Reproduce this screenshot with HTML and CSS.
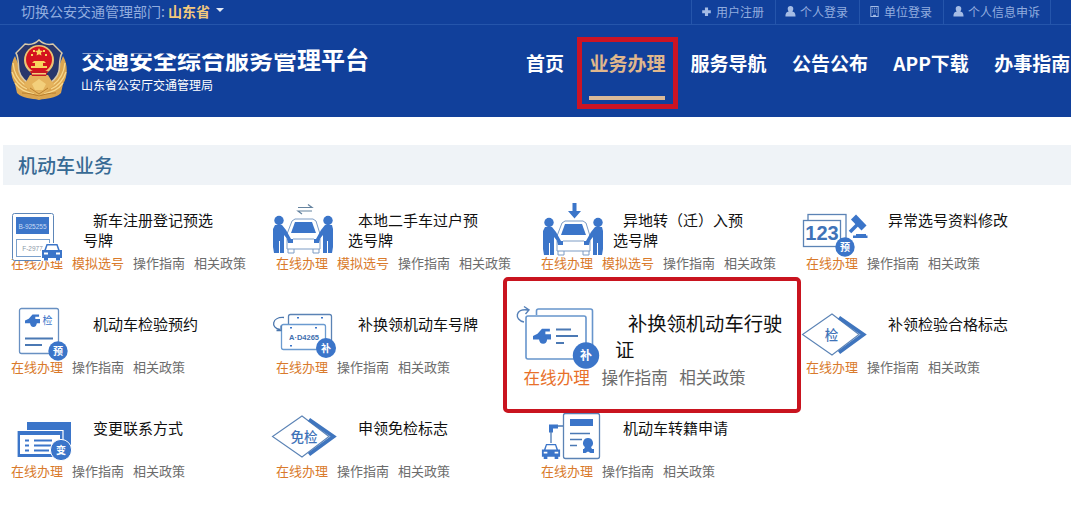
FILE: index.html
```html
<!DOCTYPE html>
<html lang="zh-CN">
<head>
  <meta charset="UTF-8" />
  <meta name="viewport" content="width=device-width, initial-scale=1" />
  <title>交通安全综合服务管理平台</title>
  <link rel="stylesheet" href="styles.css">
</head>
<body>

<!-- Iconos compartidos -->
<svg class="defs" width="0" height="0" aria-hidden="true">
  <symbol id="car" viewBox="0 0 22 18" preserveAspectRatio="none">
    <path fill="#fff" d="M4 0h14l4 7v11H0V7z"/>
    <path fill="#3b75c9" d="M5.5 1h11l2.200 6H21v8h-2v2.500h-4V15H7v2.500H3V15H1V7h2.300z"/>
    <path fill="#fff" d="M6.500 2.500h9L17 7H5zM3 9.500h4v2H3zM15 9.500h4v2h-4z"/>
  </symbol>
  <symbol id="truck" viewBox="0 0 16 16">
    <path fill="#3b75c9" d="M0 8l4-2 4-4.500h7V4h-4v2.500h5V11h-3.500a3.600 3.600 0 0 1-7 0H0z"/>
    <circle cx="9" cy="11.500" r="3.300" fill="#3b75c9"/>
  </symbol>
  <symbol id="people" viewBox="0 0 70 50" overflow="visible">
    <g fill="none" stroke="#7d9cc5" stroke-width="1">
      <path d="M19 29l5-13 3-2h18l3 2 4 13M19 29v15h33V29M25 34h21M20 44v4h6v-4M45 44v4h6v-4"/>
    </g>
    <path fill="#3b75c9" d="M27 17h17l4 11H23z"/>
    <g fill="#3b75c9">
      <circle cx="11" cy="15.500" r="4.700"/>
      <path d="M7 20h7l4 5 5 9-2 2-5-6v18h-4V36h-1v12H6l-1-6V24z"/>
      <circle cx="60" cy="15.500" r="4.700"/>
      <path d="M64 20h-7l-4 5-5 9 2 2 5-6v18h4V36h1v12h4l1-6V24z"/>
      <path d="M19 34h6v4h-5zM46 34h6l-1 4h-5z"/>
    </g>
  </symbol>
  <symbol id="user" viewBox="0 0 12 12">
    <path d="M6 0a3 3 0 0 1 3 3.200C9 5 8 5.800 8 6c2 .5 3.500 1.500 3.500 5.500H.5C.5 7.500 2 6.500 4 6 4 5.800 3 5 3 3.200A3 3 0 0 1 6 0z"/>
  </symbol>
</svg>

<header>
  <div class="topbar">
    <div class="region">切换公安交通管理部门: <b>山东省</b><i class="caret"></i></div>
    <div class="accesos">
      <a><svg viewBox="0 0 12 12"><path d="M4.300 1.500h3.400v3h3v3.400h-3v3H4.300v-3h-3V4.500h3z"/></svg>用户注册</a>
      <a><svg viewBox="0 0 12 12"><use href="#user"/></svg>个人登录</a>
      <a><svg viewBox="0 0 12 12"><path d="M1.500 0h9v12h-9zM2.500 1v10h2V9.500h3V11h2V1z" fill-rule="evenodd"/><path d="M3.500 2h1v1h-1zM5.500 2h1v1h-1zM7.500 2h1v1h-1zM3.500 4h1v1h-1zM5.500 4h1v1h-1zM7.500 4h1v1h-1zM3.500 6h1v1h-1zM5.500 6h1v1h-1zM7.500 6h1v1h-1z"/></svg>单位登录</a>
      <a><svg viewBox="0 0 12 12"><use href="#user"/></svg>个人信息申诉</a>
    </div>
  </div>
  <div class="cabecera">
    <svg class="emblema" viewBox="0 0 58 62">
      <path fill="#dba550" d="M5 17C0 25 0 38 5 45l2 9c6 6 14 5 22 7 8-2 16-1 22-7l2-9c5-7 5-20 0-28l-9 23H14z"/>
      <g fill="none" stroke="#f7d88d" stroke-width="1.300">
        <path d="M3 24c1 10 5 17 12 22M2 33c3 9 8 14 15 17M5 44c5 7 11 9 19 11M55 24c-1 10-5 17-12 22M56 33c-3 9-8 14-15 17M53 44c-5 7-11 9-19 11"/>
      </g>
      <path fill="#28366c" stroke="#d9c9a8" stroke-width="1.500" d="M29 1c4 4 9 5 14 4l9 9c-3 5-2 12-3 18-2 9-11 13-20 20C20 45 11 41 9 32 8 26 9 19 6 14l9-9c5 1 10 0 14-4z"/>
      <path fill="#e5b35c" d="M20 36h18l6 10-15 13-15-13z"/>
      <circle cx="29" cy="21" r="15" fill="#ecc474"/>
      <circle cx="29" cy="20.500" r="13" fill="#d4121f"/>
      <path fill="#f8d45e" d="M29 9l1.200 2.600 2.800.3-2.100 1.900.6 2.800-2.500-1.400-2.500 1.400.6-2.800-2.100-1.900 2.800-.3zM21 15h2v2h-2zM35 15h2v2h-2zM23 11h2v2h-2zM33 11h2v2h-2zM24 22h10l2 2h-3v3h4v2H21v-2h4v-3h-3z"/>
      <path fill="#c71a22" d="M20 32h18l-2 5H22z"/>
      <path fill="#f3cf7b" d="M22 34h14v1.500H22zM22 45l7-5 7 5-3 6h-8z"/>
      <path fill="none" stroke="#b97f2e" d="M12 54c6 0 10 1 17 3 7-2 11-3 17-3M20 49l9 6 9-6"/>
    </svg>
    <div class="marca">
      <h1>交通安全综合服务管理平台</h1>
      <p>山东省公安厅交通管理局</p>
    </div>
    <nav>
      <a>首页</a>
      <a class="activo">业务办理</a>
      <a>服务导航</a>
      <a>公告公布</a>
      <a>APP下载</a>
      <a>办事指南</a>
    </nav>
  </div>
</header>

<main>
  <h2>机动车业务</h2>
  <div class="tramites">

    <section class="tramite">
      <div class="info">
        <svg class="icono" viewBox="0 0 80 50">
          <rect x="9.500" y="8.500" width="41" height="47" rx="2" fill="#fff" stroke="#5d86b8"/>
          <rect x="13" y="12" width="33" height="17" fill="#3b75c9"/>
          <rect x="13.500" y="34.500" width="33" height="17" fill="#fff" stroke="#7aa0cc"/>
          <text x="29.500" y="23.500" class="placa" fill="#c9dcf5">B-925255</text>
          <text x="29.500" y="45.500" class="placa" fill="#8a97a8">F-2977</text>
          <use href="#car" x="38" y="38" width="22" height="18"/>
        </svg>
        <h3>新车注册登记预选号牌</h3>
      </div>
      <div class="enlaces"><a class="on">在线办理</a><a class="on">模拟选号</a><a>操作指南</a><a>相关政策</a></div>
    </section>

    <section class="tramite">
      <div class="info">
        <svg class="icono" viewBox="0 0 80 50">
          <use href="#people" width="70" height="50"/>
          <path fill="none" stroke="#65839f" stroke-width="1.200" d="M30 2.500h14l-4-3M44 6h-14l4 3"/>
        </svg>
        <h3>本地二手车过户预选号牌</h3>
      </div>
      <div class="enlaces"><a class="on">在线办理</a><a class="on">模拟选号</a><a>操作指南</a><a>相关政策</a></div>
    </section>

    <section class="tramite">
      <div class="info">
        <svg class="icono" viewBox="0 0 80 50">
          <use href="#people" x="5" y="2" width="70" height="50"/>
          <path fill="#3b75c9" d="M39.500-2h4v8h4.500l-6.500 7.500L35 6h4.500z"/>
        </svg>
        <h3>异地转（迁）入预选号牌</h3>
      </div>
      <div class="enlaces"><a class="on">在线办理</a><a class="on">模拟选号</a><a>操作指南</a><a>相关政策</a></div>
    </section>

    <section class="tramite">
      <div class="info">
        <svg class="icono" viewBox="0 0 80 50">
          <rect x="10" y="9.500" width="38" height="27" fill="#fff" stroke="#5b83b5" stroke-width="1.300"/>
          <rect x="5.500" y="15.500" width="37" height="26" fill="#fff" stroke="#5b83b5" stroke-width="1.300"/>
          <text x="24" y="35" class="cifra">123</text>
          <path fill="none" stroke="#3b75c9" stroke-width="7" d="M55.500 12L66 23"/>
          <path fill="none" stroke="#3b75c9" stroke-width="3.500" d="M61 18l-9 9"/>
          <path fill="#3b75c9" d="M58 29h10v1.500h1.500V33H55v-2.500h3z"/>
          <circle cx="47" cy="42" r="9.700" fill="#3b75c9"/>
          <text x="47" y="45.500" class="sello">预</text>
        </svg>
        <h3>异常选号资料修改</h3>
      </div>
      <div class="enlaces"><a class="on">在线办理</a><a>操作指南</a><a>相关政策</a></div>
    </section>

    <section class="tramite">
      <div class="info">
        <svg class="icono" viewBox="0 0 80 50">
          <rect x="16.500" y="-.5" width="39" height="45" rx="2" fill="#fff" stroke="#6890c2" stroke-width="1.300"/>
          <use href="#truck" x="22" y="4" width="15" height="15"/>
          <text x="44.500" y="14.500" class="sello azul">检</text>
          <path stroke="#4b79b4" stroke-width="2" d="M22 29.500h28M22 36h17"/>
          <circle cx="55" cy="42" r="9.700" fill="#3b75c9"/>
          <text x="55" y="45.500" class="sello">预</text>
        </svg>
        <h3>机动车检验预约</h3>
      </div>
      <div class="enlaces"><a class="on">在线办理</a><a>操作指南</a><a>相关政策</a></div>
    </section>

    <section class="tramite">
      <div class="info">
        <svg class="icono" viewBox="0 0 80 50">
          <rect x="20.500" y="5.500" width="43" height="30" rx="2" fill="#fff" stroke="#5b83b5" stroke-width="1.300"/>
          <rect x="13.500" y="15.500" width="44" height="25" rx="2" fill="#fff" stroke="#6b9bd0" stroke-width="1.300"/>
          <path fill="#3b75c9" d="M29 8h2v1.500h-2zM53 8h2v1.500h-2zM22 18h2v1.500h-2zM47 18h2v1.500h-2zM22 36h2v1.500h-2z"/>
          <path fill="none" stroke="#4a76ad" stroke-width="1.300" d="M16 8.500C4 7.500 2 19 12 20.500M8.500 21.500h4.500V16.500"/>
          <text x="36" y="30.500" class="matricula">A·D4265</text>
          <circle cx="58" cy="39" r="10" fill="#3b75c9"/>
          <text x="58" y="42.500" class="sello">补</text>
        </svg>
        <h3>补换领机动车号牌</h3>
      </div>
      <div class="enlaces"><a class="on">在线办理</a><a>操作指南</a><a>相关政策</a></div>
    </section>

    <section class="tramite">
      <!-- Tarjeta ampliada sobre la cuadrícula -->
      <div class="destacado">
        <div class="info">
          <svg class="icono" viewBox="0 0 107 82">
            <path fill="#fff" stroke="#6795cc" stroke-width="1.600" d="M28.500 33v-4a2 2 0 0 1 2-2h52a2 2 0 0 1 2 2v46h-8"/>
            <rect x="18" y="34" width="60" height="43" rx="2" fill="#fff" stroke="#6795cc" stroke-width="1.600"/>
            <path fill="none" stroke="#5580b8" stroke-width="1.400" d="M16 40C6 38 7 26 20 28M16 24.500l5 3.500-3.500 4"/>
            <use href="#truck" x="25" y="45" width="18" height="18"/>
            <path stroke="#4b79b4" stroke-width="2" d="M48 47.500h15M48 54h22M48 61h8"/>
            <circle cx="78" cy="73.500" r="13.200" fill="#3b75c9"/>
            <text x="78" y="78" class="sello">补</text>
          </svg>
          <h3>补换领机动车行驶证</h3>
        </div>
        <div class="enlaces"><a class="on">在线办理</a><a>操作指南</a><a>相关政策</a></div>
      </div>
    </section>

    <section class="tramite">
      <div class="info">
        <svg class="icono" viewBox="0 0 80 50">
          <path fill="none" stroke="#5b83b5" stroke-width="1.100" d="M61 25.500L34 5 4.500 25.500 34 46z"/>
          <path fill="none" stroke="#3f75be" stroke-width="3.800" d="M41 8.500l24.500 17-24.500 18"/>
          <text x="33.500" y="30.500" class="rombo">检</text>
        </svg>
        <h3>补领检验合格标志</h3>
      </div>
      <div class="enlaces"><a class="on">在线办理</a><a>操作指南</a><a>相关政策</a></div>
    </section>

    <section class="tramite">
      <div class="info">
        <svg class="icono" viewBox="0 0 80 50">
          <path fill="#3b75c9" d="M24 9h44v29H24z"/>
          <path fill="#3b75c9" stroke="#fff" stroke-width="1.200" d="M14 17.500h46v27H14z"/>
          <path fill="#fff" d="M17 22h40v19H17z"/>
          <path stroke="#3b75c9" stroke-width="2" d="M22 27.500h4M31 27.500h18M22 32.500h4M31 32.500h17M22 37.500h4M31 37.500h15"/>
          <circle cx="58" cy="37" r="10.600" fill="#3b75c9" stroke="#fff"/>
          <text x="58" y="40.500" class="sello">变</text>
        </svg>
        <h3>变更联系方式</h3>
      </div>
      <div class="enlaces"><a class="on">在线办理</a><a>操作指南</a><a>相关政策</a></div>
    </section>

    <section class="tramite">
      <div class="info">
        <svg class="icono" viewBox="0 0 80 50">
          <path fill="none" stroke="#5b83b5" stroke-width="1.100" d="M61 23.500L34 3 4.500 23.500 34 44z"/>
          <path fill="none" stroke="#3f75be" stroke-width="3.800" d="M41 6.500l24.500 17-24.500 18"/>
          <text x="36" y="28.500" class="rombo">免检</text>
        </svg>
        <h3>申领免检标志</h3>
      </div>
      <div class="enlaces"><a class="on">在线办理</a><a>操作指南</a><a>相关政策</a></div>
    </section>

    <section class="tramite">
      <div class="info">
        <svg class="icono" viewBox="0 0 80 50">
          <rect x="30.500" y=".5" width="36" height="45" rx="2" fill="#fff" stroke="#5b83b5" stroke-width="1.300"/>
          <path fill="#3b75c9" d="M37 6h23v7H37zM16 11.500h9v4h-5v4h-4z"/>
          <path fill="none" stroke="#4b79b4" stroke-width="1.300" d="M37 20.500h20M37 26.500h12M37 32.500h7M24 13h6M18 18v15"/>
          <path fill="#3b75c9" d="M55 25a5 5 0 0 1 3 9l1 2h2v4h-3.500L55 38.500 52.500 40H50v-4h1l1-2a5 5 0 0 1 3-9z"/>
          <use href="#car" x="8" y="30" width="20" height="16.500"/>
        </svg>
        <h3>机动车转籍申请</h3>
      </div>
      <div class="enlaces"><a class="on">在线办理</a><a>操作指南</a><a>相关政策</a></div>
    </section>

  </div>
</main>

</body>
</html>
```

FILE: styles.css
```css
* { box-sizing: border-box; }
body {
  margin: 0; background: #fff; color: #111; overflow: hidden;
  font-family: 'Noto Sans CJK SC', 'Noto Sans', sans-serif;
}
h1, h2, h3, p { margin: 0; }
.defs { display: block; }
header {
  background: #11409b; color: white; height: 117px; overflow: hidden;
}
.topbar {
  display: flex; justify-content: space-between; height: 25px;
  padding: 0 20px 0 21px; border-bottom: 1px solid #2555ab;
}
.region {
  display: flex; align-items: center; font-size: 14px; line-height: 23px;
  color: #91addf; white-space: pre; height: 23px;
}
.region b { color: #f3c97c; }
.caret {
  border: 4px solid transparent; border-top-color: #e3e9f5; border-bottom: 0;
  margin: 0 0 3px 6px;
}
.accesos { display: flex; border-right: 1px solid #2555ab; }
.accesos a {
  display: flex; align-items: center; gap: 4px; width: 84px; padding: 0 0 1px 9px;
  border-left: 1px solid #2555ab; font-size: 12px; color: #91addf; white-space: nowrap;
}
.accesos a:last-child { width: 107px; }
.accesos svg { width: 11px; height: 11px; fill: #a5bce5; }
.cabecera { display: flex; height: 92px; }
.emblema { width: 58px; height: 62px; margin: 14px 0 0 10px; flex: none; }
.marca { width: 458px; padding: 20px 0 0 13px; flex: none; }
.marca h1 {
  font-size: 24px; line-height: 28px; font-weight: 700; white-space: nowrap;
  clip-path: polygon(0 8.500px, 215px 8.500px, 215px 0, 100% 0, 100% 100%, 0 100%);
}
.marca p { font-size: 12px; line-height: 16px; margin-top: 4px; }
nav { display: flex; gap: 25.400px; flex: none; }
nav a {
  font-size: 19px; line-height: 28px; font-weight: 700; white-space: nowrap;
  margin-top: 24px;
}
nav .activo {
  color: #e0b78c; height: 72px; margin: 12px -12.800px 0 -12.500px; padding: 7px 7.500px 0;
  border: 5px solid #cc1424;
}
nav .activo::after {
  content: ''; display: block; height: 4px; background: #d9b999; margin-top: 19px;
}

main { padding: 28px 0 0 3px; }
h2 {
  height: 40px; padding-left: 15px; background: #eff3f7; color: #376a94;
  font-size: 19px; line-height: 39px; font-weight: 500;
}
.tramites {
  display: grid; grid-template-columns: repeat(4, 265px); grid-auto-rows: 104px;
  padding-top: 20px;
}
.tramite { position: relative; }
.info { display: flex; height: 50px; }
.icono {
  width: 80px; height: 50px; flex: none; overflow: visible; position: relative; z-index: 1;
}
.info h3 {
  width: 142px; padding-top: 5px; text-indent: 10px;
  font-size: 15px; line-height: 20px; font-weight: 400;
}
.enlaces {
  display: flex; gap: 9px; padding-left: 8px;
  font-size: 13px; line-height: 16px; color: #6c6c6c; white-space: nowrap;
}
.enlaces .on { color: #d97a2b; }

/* Tarjeta destacada */
.destacado {
  position: absolute; left: -30px; top: -32px; width: 298px; height: 136px; z-index: 2;
  background: white; border: 4px solid #c9141f; border-radius: 5px; padding: 1px;
}
.destacado .info { height: 84px; }
.destacado .icono { width: 107px; height: 82px; }
.destacado h3 {
  width: 172px; padding-top: 28px; text-indent: 13px;
  font-size: 19.300px; line-height: 26px;
}
.destacado .enlaces {
  gap: 11.500px; padding-left: 15.500px; font-size: 16.600px; line-height: 22px;
}
.destacado .on { color: #e8702a; }

/* Textos dentro de los iconos */
.icono text { text-anchor: middle; }
.placa { font: 6.500px 'Liberation Sans', sans-serif; }
.cifra { font: 700 20px 'Liberation Sans', sans-serif; fill: #3f73b8; }
.matricula { font: 700 7.500px 'Liberation Sans', sans-serif; fill: #3f6fae; }
.sello { font-size: 10px; font-weight: 700; fill: white; }
.sello.azul { fill: #3b75c9; font-weight: 400; }
.rombo { font-size: 13.500px; font-weight: 500; fill: #3f73b8; }
.destacado .sello { font-size: 12px; }
```
